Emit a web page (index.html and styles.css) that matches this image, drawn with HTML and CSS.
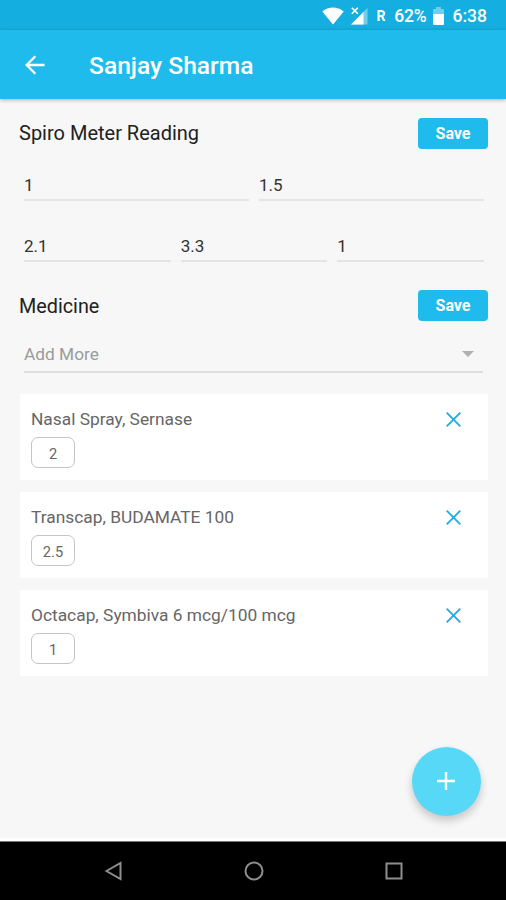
FILE: index.html
```html
<!DOCTYPE html>
<html lang="en">
<head>
    <meta charset="UTF-8">
    <meta name="viewport" content="width=device-width, initial-scale=1.0">
    <title>Sanjay Sharma</title>
    <link rel="stylesheet" href="styles.css">
</head>
<body>
    <div class="status-bar">
        <svg class="wifi" width="22" height="18" viewBox="0 0 22 18">
            <path d="M0.3 4.5C6.5-0.9 15.5-0.9 21.7 4.5L11 17.6z" fill="#fff"/>
        </svg>
        <svg class="signal" width="17" height="18" viewBox="0 0 17 18">
            <path d="M16.5 1v16.5H0z" fill="#fff" opacity="0.4"/>
            <path d="M12.5 5v12.5H0z" fill="#fff"/>
            <path d="M0.8 0.8l6 6M6.8 0.8l-6 6" stroke="#fff" stroke-width="1.6"/>
        </svg>
        <span class="roaming">R</span>
        <span class="percent">62%</span>
        <svg class="battery" width="11" height="18" viewBox="0 0 11 18">
            <path d="M3 0h5v2h2.2q.8 0 .8.8V8H0V2.800q0-.8.8-.8H3z" fill="#fff" opacity="0.4"/>
            <path d="M0 7h11v10q0 1-1 1H1q-1 0-1-1z" fill="#fff"/>
        </svg>
        <span class="clock">6:38</span>
    </div>

    <header class="toolbar">
        <svg width="20" height="20" viewBox="0 0 20 20" fill="none" stroke="#fff" stroke-width="2.3">
            <path d="M19.500 10H2M10.300 1.300L1.700 10l8.600 8.700"/>
        </svg>
        <h1>Sanjay Sharma</h1>
    </header>

    <main class="content">
        <div class="section-head">
            <h2 class="spiro">Spiro Meter Reading</h2>
            <button class="save">Save</button>
        </div>
        <div class="fields">
            <input type="text" value="1">
            <input type="text" value="1.5">
        </div>
        <div class="fields second">
            <input type="text" value="2.1">
            <input type="text" value="3.3">
            <input type="text" value="1">
        </div>

        <div class="section-head medicine">
            <h2>Medicine</h2>
            <button class="save">Save</button>
        </div>
        <div class="dropdown">
            <span>Add More</span>
            <span class="arrow"></span>
        </div>

        <div class="cards">
            <div class="card">
                <div class="card-top">
                    <span>Nasal Spray, Sernase</span>
                    <svg width="15" height="15" viewBox="0 0 15 15" stroke="#22aee0" stroke-width="1.9"><path d="M.7.7l13.600 13.600M14.300.7L.7 14.300"/></svg>
                </div>
                <div class="dose">2</div>
            </div>
            <div class="card">
                <div class="card-top">
                    <span>Transcap, BUDAMATE 100</span>
                    <svg width="15" height="15" viewBox="0 0 15 15" stroke="#22aee0" stroke-width="1.9"><path d="M.7.7l13.600 13.600M14.300.7L.7 14.300"/></svg>
                </div>
                <div class="dose">2.5</div>
            </div>
            <div class="card">
                <div class="card-top">
                    <span>Octacap, Symbiva 6 mcg/100 mcg</span>
                    <svg width="15" height="15" viewBox="0 0 15 15" stroke="#22aee0" stroke-width="1.9"><path d="M.7.7l13.600 13.600M14.300.7L.7 14.300"/></svg>
                </div>
                <div class="dose">1</div>
            </div>
        </div>
    </main>

    <button class="fab" aria-label="Add">
        <svg width="18" height="18" viewBox="0 0 18 18" stroke="#fff" stroke-width="2.4"><path d="M9 0v18M0 9h18"/></svg>
    </button>

    <nav class="nav-bar">
        <svg width="20" height="20" viewBox="0 0 20 20"><path d="M2.500 10L16.500 2v16z"/></svg>
        <svg width="20" height="20" viewBox="0 0 20 20"><circle cx="10" cy="10" r="8.500"/></svg>
        <svg width="20" height="20" viewBox="0 0 20 20"><rect x="2.500" y="2.500" width="15" height="15"/></svg>
    </nav>
</body>
</html>
```
FILE: styles.css
```css
* {
    box-sizing: border-box;
}
body {
    margin: 0;
    height: 900px;
    display: flex;
    flex-direction: column;
    overflow: hidden;
    font-family: Roboto, sans-serif;
    background-color: #f7f7f7;
    color: #212121;
}
.status-bar {
    height: 30px;
    flex: none;
    display: flex;
    align-items: center;
    justify-content: flex-end;
    padding: 1px 19px 0 0;
    background-color: #15aee0;
    color: #fff;
    font-size: 17.5px;
    font-weight: 500;
}
.signal {
    margin-left: 7px;
}
.roaming {
    margin-left: 8px;
    font-size: 14px;
    font-weight: 700;
}
.percent {
    margin-left: 9px;
    letter-spacing: -0.2px;
}
.battery {
    margin-left: 6px;
}
.clock {
    margin-left: 9px;
}
.toolbar {
    height: 69px;
    flex: none;
    display: flex;
    align-items: center;
    gap: 44px;
    padding-left: 25px;
    background-color: #1ebbec;
    color: #fff;
    box-shadow: 0 1px 4px rgba(0, 0, 0, 0.3);
}
.toolbar h1 {
    margin: 2px 0 0;
    font-size: 24.6px;
    font-weight: 500;
}
.content {
    flex: 1;
    padding: 19px 18px 0 19px;
    border-bottom: 3px solid #fff;
}
.section-head {
    display: flex;
    justify-content: space-between;
    align-items: center;
    height: 30px;
}
.section-head h2 {
    margin: 0;
    font-size: 20px;
    font-weight: 400;
}
.save {
    width: 70px;
    height: 31px;
    padding: 1px 0 0;
    border: none;
    border-radius: 4px;
    background-color: #1ebbec;
    color: #fff;
    font-family: inherit;
    font-size: 16px;
    font-weight: 700;
}
.fields {
    display: flex;
    gap: 10px;
    margin-top: 22px;
    padding: 0 4px 0 5px;
}
.fields.second {
    margin-top: 30px;
}
.fields input {
    flex: 1;
    min-width: 0;
    height: 31px;
    padding: 0;
    border: none;
    border-bottom: 2px solid #e4e4e4;
    background: none;
    color: #333;
    font-family: inherit;
    font-size: 17px;
}
.section-head.medicine {
    margin-top: 28px;
}
.section-head.medicine h2 {
    padding-top: 2px;
    font-size: 19.8px;
}
.dropdown {
    display: flex;
    justify-content: space-between;
    align-items: center;
    height: 36px;
    margin: 17px 5px 0;
    padding-right: 9px;
    border-bottom: 2px solid #dedede;
    color: #9b9b9b;
    font-size: 17.3px;
}
.arrow {
    border: 6px solid transparent;
    border-top-color: #b0b0b0;
    border-bottom: none;
}
.cards {
    display: flex;
    flex-direction: column;
    gap: 12px;
    margin: 21px 0 0 1px;
}
.card {
    height: 86px;
    padding: 14px 27px 0 11px;
    background-color: #fff;
    color: #666;
}
.card-top {
    display: flex;
    justify-content: space-between;
    align-items: center;
    height: 22px;
    font-size: 17.35px;
}
.dose {
    display: flex;
    align-items: center;
    justify-content: center;
    width: 44px;
    height: 31px;
    margin-top: 7px;
    padding-top: 3px;
    border: 1px solid #c4c4c4;
    border-radius: 7px;
    font-size: 14.6px;
}
/* floats over the page content */
.fab {
    position: absolute;
    right: 25px;
    bottom: 84px;
    width: 69px;
    height: 69px;
    display: flex;
    align-items: center;
    justify-content: center;
    padding: 0 1px 1px 0;
    border: none;
    border-radius: 50%;
    background-color: #57d8f6;
    box-shadow: 0 5px 9px rgba(0, 0, 0, 0.2);
}
.nav-bar {
    height: 59px;
    flex: none;
    display: flex;
    align-items: center;
    justify-content: center;
    gap: 120px;
    padding-left: 1px;
    border-top: 1px solid #777;
    background-color: #000;
}
.nav-bar svg {
    fill: none;
    stroke: #8e8e8e;
    stroke-width: 2;
}
```
